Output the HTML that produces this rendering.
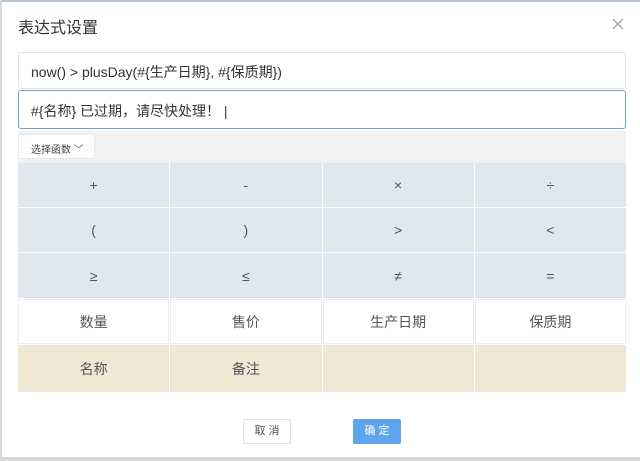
<!DOCTYPE html><html><head><style>
body{margin:0;width:640px;height:461px;background:#fff;position:relative;overflow:hidden;font-family:"Liberation Sans","Noto Sans CJK SC",sans-serif;color:#333}
.a{position:absolute;box-sizing:border-box}
.g{position:absolute;left:18px;top:163px;width:608px;display:grid;grid-template-columns:repeat(4,1fr);grid-template-rows:44px 44px 45px 45px 47px;gap:1px;background:#fff}
.g div{display:flex;align-items:center;justify-content:center;font-size:14px;color:#555}
.b{background:#dfe7f0}.w{background:#fff}.t{background:#f2e6d4}
</style></head><body>
<div class="a" style="left:0;top:0;width:640px;height:2px;background:#b8c6d4"></div>
<div class="a" style="left:0;top:0;width:2px;height:461px;background:#d4dbe2"></div>
<div class="a" style="left:18px;top:14px;font-size:16px;color:#333">表达式设置</div>
<svg class="a" style="left:612px;top:18px" width="12" height="12" viewBox="0 0 12 12"><path d="M1 1L11 11M11 1L1 11" stroke="#999" stroke-width="1.2"/></svg>
<div class="a" style="left:18px;top:52px;width:608px;height:37px;border:1px solid #e2e2e2;border-radius:3px;padding:9px 12px;font-size:14px">now() &gt; plusDay(#{生产日期}, #{保质期})</div>
<div class="a" style="left:18px;top:90px;width:608px;height:39px;border:1px solid #7a9cbc;border-radius:3px;padding:10px 12px;font-size:14px">#{名称} 已过期，请尽快处理！ <span style="color:#333">|</span></div>
<div class="a" style="left:18px;top:131px;width:608px;height:32px;background:#f1f1f1"></div>
<div class="a" style="left:18px;top:134px;width:77px;height:25px;background:#fff;border:1px solid #e8e8e8;border-radius:2px;font-size:10px;padding:6px 0 0 12px;color:#444">选择函数 ﹀</div>
<div class="g">
<div class="b">+</div><div class="b">-</div><div class="b">×</div><div class="b">÷</div>
<div class="b">(</div><div class="b">)</div><div class="b">&gt;</div><div class="b">&lt;</div>
<div class="b">≥</div><div class="b">≤</div><div class="b">≠</div><div class="b">=</div>
<div class="w" style="border:1px solid #eee">数量</div><div class="w" style="border:1px solid #eee">售价</div><div class="w" style="border:1px solid #eee">生产日期</div><div class="w" style="border:1px solid #eee">保质期</div>
<div class="t">名称</div><div class="t">备注</div><div class="t"></div><div class="t"></div>
</div>
<div class="a" style="left:243px;top:419px;width:48px;height:25px;border:1px solid #e2e2e2;border-radius:2px;font-size:11px;text-align:center;line-height:23px;color:#555">取 消</div>
<div class="a" style="left:353px;top:419px;width:48px;height:25px;background:#5ea6ea;border-radius:2px;font-size:11px;text-align:center;line-height:25px;color:#fff">确 定</div>
<div class="a" style="left:0;top:457px;width:640px;height:4px;background:#d8d8d8"></div>
</body></html>
